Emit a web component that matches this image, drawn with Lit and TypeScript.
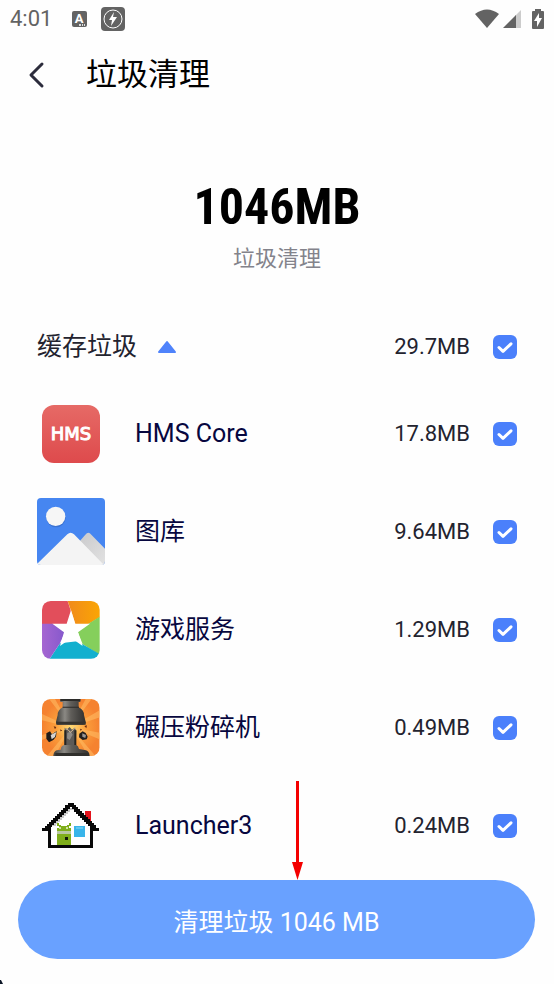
import { LitElement, html, svg, css } from "lit";
import { customElement, property, state } from "lit/decorators.js";

const hmsIcon = svg`
  <svg class="pic" viewBox="0 0 68 68" aria-hidden="true">
    <defs>
      <linearGradient id="red" x1="0" y1="0" x2="0" y2="1">
        <stop offset="0" stop-color="#e66a66" />
        <stop offset="1" stop-color="#de4a4c" />
      </linearGradient>
    </defs>
    <rect x="5" y="5" width="58" height="58" rx="12" fill="url(#red)" />
    <text class="hms" x="34" y="40" text-anchor="middle">HMS</text>
  </svg>`;

const galleryIcon = svg`
  <svg class="pic" viewBox="21 24 204 204" aria-hidden="true">
    <defs>
      <linearGradient id="shade" x1="0" y1="0" x2="1" y2="1">
        <stop offset="0" stop-color="#c9c9cb" />
        <stop offset="1" stop-color="#e2e2e2" />
      </linearGradient>
      <clipPath id="frame"><rect x="21" y="24" width="204" height="201" rx="12" /></clipPath>
    </defs>
    <g clip-path="url(#frame)">
      <rect x="21" y="24" width="204" height="201" fill="#4686f1" />
      <circle cx="78" cy="83" r="29" fill="#3a72d2" />
      <circle cx="77" cy="79" r="29" fill="#f6f6f6" />
      <path d="M145 158L166 134Q175 123 184 134L225 176V225H200Z" fill="url(#shade)" />
      <path d="M21 222L112 133Q122 123 132 133L222 225H21Z" fill="#f4f4f4" />
    </g>
  </svg>`;

const gamesIcon = svg`
  <svg class="pic" viewBox="21 18 204 204" aria-hidden="true">
    <defs>
      <clipPath id="tile"><rect x="36" y="33" width="173" height="173" rx="26" /></clipPath>
      <linearGradient id="orange"><stop offset="0" stop-color="#f08a1c" /><stop offset="1" stop-color="#fba603" /></linearGradient>
      <linearGradient id="violet"><stop offset="0" stop-color="#a867d2" /><stop offset="1" stop-color="#8458cc" /></linearGradient>
    </defs>
    <g clip-path="url(#tile)">
      <path d="M30 30H112L135 102L120 125L30 102Z" fill="#e24e5b" />
      <path d="M112 30H212V80L142 122L123 62Z" fill="url(#orange)" />
      <path d="M212 78L142 122L158 163L212 196Z" fill="#85cf5c" />
      <path d="M212 194L142 154L90 160L58 208H212Z" fill="#12b0cf" />
      <path d="M30 101H68L108 120L90 160L58 208H30Z" fill="url(#violet)" />
      <path d="M123 60L136 101H180L144 127L158 168L124 144L90 168L102 127L67 101H110Z" fill="#fff" />
    </g>
  </svg>`;

const crusherIcon = svg`
  <svg class="pic" viewBox="21 15 204 204" aria-hidden="true">
    <defs>
      <clipPath id="plate"><rect x="36" y="30" width="173" height="171" rx="26" /></clipPath>
      <radialGradient id="glow">
        <stop offset="0" stop-color="#ffe27a" /><stop offset=".5" stop-color="#fba03c" /><stop offset="1" stop-color="#f58230" />
      </radialGradient>
      <linearGradient id="steel">
        <stop offset="0" stop-color="#3d3c39" /><stop offset=".3" stop-color="#8b8984" />
        <stop offset=".5" stop-color="#605e5a" /><stop offset="1" stop-color="#302f2d" />
      </linearGradient>
    </defs>
    <g clip-path="url(#plate)">
      <rect x="36" y="30" width="173" height="171" fill="url(#glow)" />
      <path d="M122 115L30 72V92ZM122 115L30 140V156ZM122 115L48 205H72ZM122 115L178 205H200ZM122 115L212 132V152ZM122 115L212 62V84ZM122 115L56 28H74ZM122 115L168 28H186Z" fill="#ffbb62" opacity=".6" />
      <path d="M91 30H151V39H146V55Q162 63 162 78L167 98Q168 107 158 107H87Q77 107 78 98L83 78Q83 63 98 55V39H91Z" fill="url(#steel)" />
      <path d="M91 30H151V36H91ZM98 53H147V56H98Z" fill="#2c2b29" />
      <path d="M79 98H167V107H79Z" fill="#35332f" />
      <path d="M104 116L112 120L119 114L126 122L134 116L139 125L137 182H103Z" fill="#5d5a57" />
      <path d="M103 124H109V182H103ZM133 124H139V182H133Z" fill="#252422" />
      <path d="M112 132L122 127L128 137L119 153L111 148Z" fill="#8e8b87" />
      <path d="M106 119L115 123L121 130L130 122L136 114" fill="none" stroke="#d0b795" stroke-width="3" />
      <path d="M49 133L60 127L66 136L80 126L78 143L70 153L57 160L49 149Z" fill="#1f1c1a" />
      <path d="M62 138L79 129L75 144L65 151Z" fill="#d6d3cf" />
      <path d="M148 134L158 127L167 132L173 143L170 151L158 153L147 145Z" fill="#24201e" />
      <path d="M157 133L168 138L166 147L157 143Z" fill="#9a9794" />
      <path d="M71 112L79 114L75 121ZM163 111L171 109L169 118ZM150 119L156 121L152 126ZM91 121L97 125L91 127Z" fill="#6d2c0e" />
      <path d="M94 174Q98 168 104 168H138Q145 170 147 180L168 184Q178 187 179 201H70Q71 187 80 184L92 182Z" fill="url(#steel)" />
      <path d="M76 192H173V201H76Z" fill="#302f2c" />
    </g>
  </svg>`;

const houseIcon = svg`
  <svg class="pic" viewBox="21 9 204 204" shape-rendering="crispEdges" aria-hidden="true">
    <path d="M165 66H183V100H165Z" fill="#e3121b" />
    <path d="M123 50L187 112V172H59V112Z" fill="#fff" />
    <path d="M113 58H131V64H119V70H113V76H107V82H101V88H95V94H89V100H83V106H77V112H65V106H71V100H77V94H83V88H89V82H95V76H101V70H107V64H113Z" fill="#c9c9c9" />
    <path d="M114 42H132V48H138V54H144V60H150V66H156V72H162V78H168V84H174V90H180V96H186V102H192V108H198V117H207V126H190V177H54V126H37V117H46V111H52V105H58V99H64V93H70V87H76V81H82V75H88V69H94V63H100V57H106V48H114ZM119 54V60H113V66H107V72H101V78H95V84H89V90H83V96H77V102H71V108H65V114H63V169H181V117H179V111H173V105H167V99H161V93H155V87H149V81H143V75H137V69H131V60H125V54Z" fill="#080808" fill-rule="evenodd" />
    <path d="M81 101H87V107H93V110H111V107H117V101H123V110H117V116H123V168H80V116H87V110H81Z" fill="#7fae1b" />
    <path d="M80 126H123V134H80Z" fill="#b9c7a3" />
    <path d="M87 115H92V120H87ZM109 115H114V120H109Z" fill="#d4e3a5" />
    <path d="M105 143H114V152H105Z" fill="#101808" />
    <path d="M132 110H165V143H132Z" fill="#39b5ea" />
    <path d="M137 115H160V121H137Z" fill="#62c8f0" />
  </svg>`;

const apps = [
  { name: "HMS Core", size: "17.8MB", icon: hmsIcon },
  { name: "图库", size: "9.64MB", icon: galleryIcon },
  { name: "游戏服务", size: "1.29MB", icon: gamesIcon },
  { name: "碾压粉碎机", size: "0.49MB", icon: crusherIcon },
  { name: "Launcher3", size: "0.24MB", icon: houseIcon },
];

@customElement("check-box")
class CheckBox extends LitElement {
  @property() label = "";

  static styles = css`
    :host { display: block; }
    .box { display: grid; width: 24px; height: 24px; }
    .input, .tick { grid-area: 1 / 1; width: 24px; height: 24px; margin: 0; }
    .input { appearance: none; border-radius: 6px; border: 2px solid #b9bdc9; background: #fff; }
    .input:checked { border: 0; background: #4b80fb; }
    .tick { pointer-events: none; fill: none; stroke: #fff; stroke-width: 3; stroke-linecap: round; stroke-linejoin: round; }
  `;

  render() {
    return html`<label class="box">
      <input class="input" type="checkbox" checked aria-label=${this.label} />
      <svg class="tick" viewBox="0 0 24 24" aria-hidden="true"><path d="M6 12.5L10 16.3L18 8.8" /></svg>
    </label>`;
  }
}

@customElement("app-root")
class AppRoot extends LitElement {
  @state() open = true;

  static styles = css`
    :host {
      display: flex;
      flex-direction: column;
      position: relative;
      min-height: 100vh;
      box-sizing: border-box;
      overflow: hidden;
      background: #fefefe;
      color: #23232f;
      font-family: Roboto, "Noto Sans CJK SC", sans-serif;
    }
    button { border: 0; padding: 0; background: none; font: inherit; color: inherit; }
    .status { display: flex; align-items: center; height: 38px; padding: 0 10px; color: #636363; fill: currentColor; }
    .time { font-size: 22px; line-height: 38px; margin-right: 19px; }
    .badge { width: 16px; height: 16px; margin-right: 14px; }
    .power { width: 24px; height: 24px; margin-right: auto; }
    .wifi { width: 24px; height: 20px; margin-right: 4px; }
    .signal { width: 18px; height: 20px; margin-right: 11px; }
    .battery { width: 12px; height: 20px; }
    .letter { font: 700 13px Roboto, sans-serif; fill: #fff; }
    .bar { display: flex; align-items: center; height: 73px; padding: 0 24px; }
    .back { display: flex; width: 62px; height: 48px; align-items: center; }
    .chevron { width: 24px; height: 28px; fill: none; stroke: #2c2c3c; stroke-width: 3; stroke-linecap: round; stroke-linejoin: round; }
    .title { margin: 0; font-size: 31px; line-height: 40px; font-weight: 400; color: #000; }
    .summary { display: flex; flex-direction: column; align-items: center; padding-top: 61px; height: 137px; }
    .total { font: 700 50px/70px "Roboto Condensed", Roboto, sans-serif; color: #000; }
    .caption { margin: 0; font-size: 22px; line-height: 34px; color: #83838b; }
    .row { display: flex; align-items: center; height: 98px; padding: 0 37px; }
    .group { height: 76px; }
    .toggle { display: flex; align-items: center; gap: 20px; font-size: 24px; line-height: 36px; margin-right: auto; }
    .arrow { width: 20px; height: 14px; fill: #4f83fb; stroke: #4f83fb; stroke-width: 2; stroke-linejoin: round; }
    .down { transform: rotate(180deg); }
    .list { list-style: none; margin: 0; padding: 0; }
    .pic { width: 68px; height: 68px; margin-right: 30px; flex: none; }
    .hms { font: 400 18px "DejaVu Sans", sans-serif; fill: #fff; stroke: #fff; stroke-width: 1px; }
    .name { flex: 1; color: #07073f; }
    .toggle, .name { font-size: 25px; line-height: 36px; }
    .size { font-size: 22px; line-height: 32px; margin-right: 23px; }
    .footer { position: relative; margin-top: auto; padding: 0 19px 25px 18px; }
    .clean { display: block; width: 100%; height: 79px; border-radius: 40px; background: #69a1ff; color: #fff; font-size: 25px; }
    .pointer { position: absolute; bottom: 100%; left: calc(50% + 14px); width: 13px; height: 100px; fill: #f40000; }
    .speck { position: absolute; left: 0; bottom: 0; width: 3px; height: 4px; fill: #0c1626; }
  `;

  render() {
    return html`
      <div class="status">
        <span class="time">4:01</span>
        <svg class="badge" viewBox="0 0 16 16" aria-hidden="true">
          <rect x="1" width="15" height="16" rx="2" />
          <text class="letter" x="8" y="12" text-anchor="middle">A</text>
          <path d="M8 13H10V15H8ZM11 13H12V15H11ZM13 13H14V15H13Z" fill="#ddd" />
        </svg>
        <svg class="power" viewBox="0 0 24 24" aria-hidden="true">
          <rect width="24" height="24" rx="4" />
          <circle cx="12" cy="12" r="9" fill="none" stroke="#fff" />
          <path d="M13 5L8 13H11L10 19L16 10H12Z" fill="#fff" />
        </svg>
        <svg class="wifi" viewBox="0 0 24 20" aria-hidden="true"><path d="M0 5Q12-4 24 5L12 19Z" /></svg>
        <svg class="signal" viewBox="0 0 18 20" aria-hidden="true">
          <path d="M12 7L18 1V19H12Z" fill="#ccc" /><path d="M0 19L13 6V19Z" />
        </svg>
        <svg class="battery" viewBox="0 0 12 20" aria-hidden="true">
          <path d="M3 0H9V2H11Q12 2 12 3V19Q12 20 11 20H1Q0 20 0 19V3Q0 2 1 2H3Z" />
          <path d="M7 4L2 12H5V18L10 9H7Z" fill="#fff" />
        </svg>
      </div>
      <header class="bar">
        <button class="back" type="button" aria-labelledby="title">
          <svg class="chevron" viewBox="0 0 24 28" aria-hidden="true"><path d="M18 3L7 14L18 25" /></svg>
        </button>
        <h1 class="title" id="title">垃圾清理</h1>
      </header>
      <section class="summary">
        <div class="total">1046MB</div>
        <p class="caption">垃圾清理</p>
      </section>
      <div class="row group">
        <button class="toggle" type="button" aria-expanded=${this.open} @click=${() => (this.open = !this.open)}>
          缓存垃圾
          <svg class="arrow ${this.open ? "up" : "down"}" viewBox="0 0 20 14" aria-hidden="true"><path d="M10 2L18 12H2Z" /></svg>
        </button>
        <span class="size">29.7MB</span>
        <check-box label="缓存垃圾"></check-box>
      </div>
      <ul class="list" ?hidden=${!this.open}>
        ${apps.map((app) => html`
          <li class="row">
            ${app.icon}
            <span class="name">${app.name}</span>
            <span class="size">${app.size}</span>
            <check-box label=${app.name}></check-box>
          </li>`)}
      </ul>
      <footer class="footer">
        <svg class="pointer" viewBox="0 0 13 100" aria-hidden="true"><path d="M5 1H8V82H12L6.500 100L1 82H5Z" /></svg>
        <button class="clean" type="button">清理垃圾 1046 MB</button>
      </footer>
      <svg class="speck" viewBox="0 0 3 4" aria-hidden="true"><path d="M0 0H1L3 4H0Z" /></svg>
    `;
  }
}
